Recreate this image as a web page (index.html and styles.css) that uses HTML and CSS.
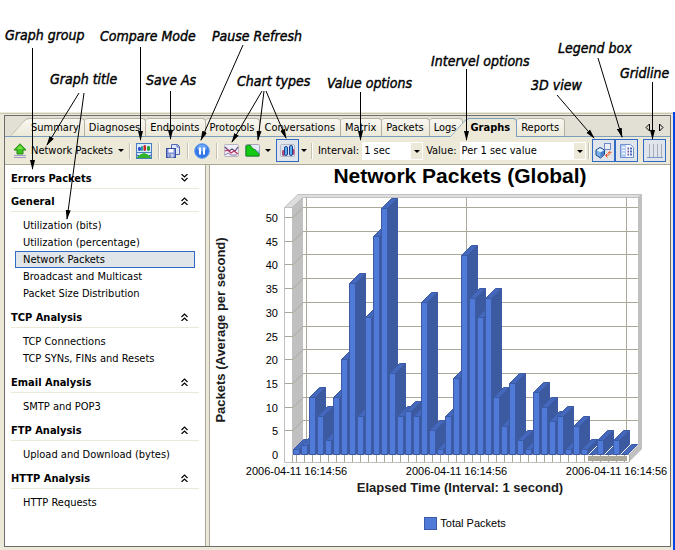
FILE: index.html
```
<!DOCTYPE html>
<html lang="en">
<head>
  <meta charset="UTF-8">
  <meta name="viewport" content="width=device-width, initial-scale=1.0">
  <title>Network Packets (Global)</title>
  <link rel="stylesheet" href="styles.css">
</head>
<body>
  <div class="page">
    <main class="window">
      <div class="frame">
        <nav class="tabs">
          <a class="tab first" href="#summary">Summary</a>
          <a class="tab" href="#diagnoses">Diagnoses</a>
          <a class="tab" href="#endpoints">Endpoints</a>
          <a class="tab" href="#protocols">Protocols</a>
          <a class="tab" href="#conversations">Conversations</a>
          <a class="tab" href="#matrix">Matrix</a>
          <a class="tab" href="#packets">Packets</a>
          <a class="tab" href="#logs">Logs</a>
          <a class="tab active" href="#graphs" aria-current="page">Graphs</a>
          <a class="tab" href="#reports">Reports</a>
          <span class="tab-scroll">
            <button type="button" aria-label="Previous tab"><svg width="5" height="9" viewBox="0 0 5 9"><path d="M4.5 1v7L1 4.5z"/></svg></button>
            <button type="button" aria-label="Next tab"><svg width="5" height="9" viewBox="0 0 5 9"><path d="M.5 1v7L4 4.5z"/></svg></button>
          </span>
        </nav>

        <div class="toolbar">
          <button type="button" class="tool title-tool">
            <svg width="14" height="15" viewBox="0 0 14 15">
              <path d="M7 .8 13 7H10v4H4V7H1z" fill="#3cc41c" stroke="#2a8a18"/>
              <path d="M7 2.5 10 6H4z" fill="#7be04a"/>
              <path d="M1 12.5h12M1 14.5h12" stroke="#9a9ac4"/>
            </svg>
            Network Packets
            <i class="caret"></i>
          </button>
          <i class="sep"></i>
          <button type="button" class="tool" aria-label="Compare Mode">
            <svg width="16" height="16" viewBox="0 0 16 16">
              <rect x=".5" y=".5" width="15" height="15" fill="#d8ecff" stroke="#4a7cc0"/>
              <rect x="2" y="4" width="3" height="4" rx="1.400" fill="#3048d0"/>
              <rect x="5" y="3" width="2" height="5" rx="1" fill="#28a0a0"/>
              <rect x="7.500" y="2" width="2.500" height="6" rx="1.200" fill="#d02828"/>
              <rect x="11" y="3" width="3" height="5" rx="1.400" fill="#28a030"/>
              <path d="M1 9.500h14" stroke="#4a7cc0"/>
              <path d="M1 15v-1l4-3 3-1 3 1 4 3v1z" fill="#32b428"/>
              <path d="M1 12l2 1M15 12l-2 1" stroke="#2850c0" fill="none"/>
            </svg>
          </button>
          <i class="sep"></i>
          <button type="button" class="tool" aria-label="Save As">
            <svg width="16" height="16" viewBox="0 0 16 16">
              <path d="M6.500 1.500h6l2 2v8h-8z" fill="#dfe8fb" stroke="#5468b8"/>
              <path d="M12 1.500v2.500h2.500" fill="none" stroke="#5468b8"/>
              <rect x="1.500" y="5.500" width="9" height="9" fill="#7c90d8" stroke="#3a4c9c"/>
              <rect x="3.500" y="6" width="5" height="3.500" fill="#fff"/>
              <rect x="3.500" y="11" width="5" height="3.500" fill="#c8d2ee"/>
              <path d="M5 11.500v3" stroke="#3a4c9c"/>
            </svg>
          </button>
          <i class="sep"></i>
          <button type="button" class="tool" aria-label="Pause Refresh">
            <svg width="16" height="16" viewBox="0 0 16 16">
              <circle cx="8" cy="8" r="7.300" fill="#3478e8" stroke="#5c98f0"/>
              <ellipse cx="8" cy="5" rx="5" ry="3.500" fill="#6ca4f6"/>
              <path d="M6 4.500v7M10 4.500v7" stroke="#fff" stroke-width="2"/>
            </svg>
          </button>
          <i class="sep"></i>
          <button type="button" class="tool" aria-label="Line chart">
            <svg width="15" height="15" viewBox="0 0 15 15">
              <rect x=".5" y="1.500" width="14" height="12" rx="1" fill="#f0eef6" stroke="#b8b4c4"/>
              <path d="M1 4l4 4 3-2 3 2 3-4" fill="none" stroke="#604878" stroke-width="1.200"/>
              <path d="M1 8l3-1 3 3 3-2 4 3" fill="none" stroke="#c03060" stroke-width="1.200"/>
              <path d="M1 12l3-2 3 2h6" fill="none" stroke="#8c7ca8"/>
            </svg>
          </button>
          <button type="button" class="tool split" aria-label="Area chart">
            <svg width="15" height="15" viewBox="0 0 15 15">
              <rect x=".5" y="1.500" width="14" height="12" rx="1" fill="#e8ecfa" stroke="#a8a4b8"/>
              <path d="M1 13V3l4-1 3 4 3 1 3 4v2z" fill="#14c814" stroke="#0a9014"/>
              <path d="M10 6l4 4V7" stroke="#8c9ce0" fill="none"/>
            </svg>
            <i class="caret"></i>
          </button>
          <button type="button" class="tool toggled" aria-label="Bar chart" aria-pressed="true">
            <svg width="15" height="15" viewBox="0 0 15 15">
              <rect x=".5" y="1.500" width="14" height="12" rx="1" fill="#dce2ee" stroke="#b4b8c4"/>
              <rect x="2" y="7" width="3" height="6" rx="1.400" fill="#b84878"/>
              <rect x="4.500" y="3.500" width="3" height="9" rx="1.400" fill="#5cb0f0" stroke="#203c90"/>
              <rect x="11.500" y="6" width="3" height="6" rx="1.400" fill="#b84878"/>
              <rect x="9.500" y="2.500" width="3" height="10" rx="1.400" fill="#5cb0f0" stroke="#203c90"/>
            </svg>
          </button>
          <button type="button" class="caret-btn" aria-label="Bar chart styles"><i class="caret"></i></button>
          <i class="sep"></i>
          <label class="field-label" for="interval">Interval:</label>
          <span class="combo combo-interval">
            <select id="interval"><option>1 sec</option></select>
          </span>
          <label class="field-label" for="value">Value:</label>
          <span class="combo combo-value">
            <select id="value"><option>Per 1 sec value</option></select>
          </span>
          <i class="sep"></i>
          <span class="toggle-group">
            <button type="button" class="tool toggled" aria-label="3D view" aria-pressed="true">
              <svg width="17" height="17" viewBox="0 0 17 17">
                <path d="M1 8l4-2.500L9.500 8v4.500L5.500 16 1 13z" fill="#78b0e8" stroke="#1c4488"/>
                <path d="M1.500 8.200l4 2 3.500-2-4-2z" fill="#e4f4ff"/>
                <path d="M5.500 10.500v5l3.500-3v-4z" fill="#4880c8"/>
                <rect x="9.500" y="1.500" width="6" height="6" fill="#e8eef8" stroke="#7088c8"/>
                <path d="M15 10c0 3-2 3.500-4 3.500M13 11l2-1.500L16.500 11M12.500 11.500l-2 2 2 2" fill="none" stroke="#f05010"/>
              </svg>
            </button>
            <button type="button" class="tool toggled" aria-label="Legend box" aria-pressed="true">
              <svg width="16" height="16" viewBox="0 0 16 16">
                <path d="M1.500 1.500h10l3 3v10h-13z" fill="#f4f8ff" stroke="#7090cc"/>
                <path d="M2 2h5v12H2z" fill="#b4cdf0"/>
                <path d="M3 4.500h3M3 7.500h3M3 10.500h3" stroke="#fff"/>
                <path d="M8.500 5.500h1.500M8.500 8.500h1.500M8.500 11.500h1.500" stroke="#7858a0" stroke-width="2"/>
                <path d="M11 5.500h2M11 8.500h2M11 11.500h2" stroke="#4868b8" stroke-width="2"/>
              </svg>
            </button>
          </span>
          <button type="button" class="tool toggled" aria-label="Gridline" aria-pressed="true">
            <svg width="16" height="16" viewBox="0 0 16 16">
              <path d="M2.500 1v13M6.500 1v13M10.500 1v13M14.500 1v13" stroke="#a8acb8"/>
              <path d="M0 14.500h16" stroke="#7c94cc"/>
            </svg>
          </button>
        </div>

        <div class="content">
          <aside class="sidebar">
            <button type="button" class="group closed">Errors Packets <svg class="chev" width="7" height="8" viewBox="0 0 7 8"><path d="M.5 4l3-3 3 3M.5 8l3-3 3 3"/></svg></button>
            <button type="button" class="group">General <svg class="chev" width="7" height="8" viewBox="0 0 7 8"><path d="M.5 4l3-3 3 3M.5 8l3-3 3 3"/></svg></button>
            <ul class="graphs">
              <li><a href="#bits">Utilization (bits)</a></li>
              <li><a href="#percentage">Utilization (percentage)</a></li>
              <li><a class="selected" href="#network">Network Packets</a></li>
              <li><a href="#broadcast">Broadcast and Multicast</a></li>
              <li><a href="#size">Packet Size Distribution</a></li>
            </ul>
            <button type="button" class="group">TCP Analysis <svg class="chev" width="7" height="8" viewBox="0 0 7 8"><path d="M.5 4l3-3 3 3M.5 8l3-3 3 3"/></svg></button>
            <ul class="graphs">
              <li><a href="#tcp">TCP Connections</a></li>
              <li><a href="#syn">TCP SYNs, FINs and Resets</a></li>
            </ul>
            <button type="button" class="group">Email Analysis <svg class="chev" width="7" height="8" viewBox="0 0 7 8"><path d="M.5 4l3-3 3 3M.5 8l3-3 3 3"/></svg></button>
            <ul class="graphs">
              <li><a href="#smtp">SMTP and POP3</a></li>
            </ul>
            <button type="button" class="group">FTP Analysis <svg class="chev" width="7" height="8" viewBox="0 0 7 8"><path d="M.5 4l3-3 3 3M.5 8l3-3 3 3"/></svg></button>
            <ul class="graphs">
              <li><a href="#ftp">Upload and Download (bytes)</a></li>
            </ul>
            <button type="button" class="group">HTTP Analysis <svg class="chev" width="7" height="8" viewBox="0 0 7 8"><path d="M.5 4l3-3 3 3M.5 8l3-3 3 3"/></svg></button>
            <ul class="graphs">
              <li><a href="#http">HTTP Requests</a></li>
            </ul>
          </aside>

          <section class="chart">
            <h1>Network Packets (Global)</h1>
            <svg class="plot" id="plot" viewBox="0 0 460 318" role="img" aria-label="Packets per second">
              <!-- walls of the 3D box -->
              <path class="cap" d="M74.500 20.500 88 7.500H431.500L428 10.500H93L82.500 20.500z"/>
              <path class="wall" d="M82 20 93 10V257L82 268z"/>
              <path class="wall" d="M428 10 432 7V262L419 275V267L428 258z"/>
              <g id="grid" class="grid"></g>
              <path class="edge" d="M74.500 20V275.500H419"/>
              <g id="bars" class="bars"></g>
              <g id="labels" class="labels"></g>
              <rect class="scroll" x="378" y="269" width="39" height="5"/>
              <text class="axis-title" x="250" y="305" text-anchor="middle">Elapsed Time (Interval: 1 second)</text>
              <text class="axis-title" transform="translate(15 143) rotate(-90)" text-anchor="middle">Packets (Average per second)</text>
            </svg>
            <p class="legend"><i class="swatch"></i>Total Packets</p>
          </section>
        </div>
      </div>
    </main>

    <!-- callouts drawn over the window -->
    <svg class="callouts" width="675" height="240" viewBox="0 0 675 240">
      <defs>
        <marker id="arrow" markerWidth="10" markerHeight="6" refX="9" refY="3" orient="auto" markerUnits="userSpaceOnUse">
          <path d="M0 .5 10 3 0 5.500z"/>
        </marker>
      </defs>
      <g class="lines">
        <path d="M32.500 48V169"/>
        <path d="M79 93 47 145"/>
        <path d="M84 93 67 219"/>
        <path d="M140.500 47V140"/>
        <path d="M170.500 91V139"/>
        <path d="M243 45 201 140"/>
        <path d="M262 91 232 142"/>
        <path d="M264 91 258 140"/>
        <path d="M266 91 286 138"/>
        <path d="M360.500 92V140"/>
        <path d="M466.500 69V140"/>
        <path d="M557 95 594 138"/>
        <path d="M598 58 622 137"/>
        <path d="M652.500 82V139"/>
      </g>
      <g class="names">
        <text x="5" y="40">Graph group</text>
        <text x="100" y="41">Compare Mode</text>
        <text x="212" y="41">Pause Refresh</text>
        <text x="50" y="84">Graph title</text>
        <text x="146" y="85">Save As</text>
        <text x="237" y="86">Chart types</text>
        <text x="327" y="88">Value options</text>
        <text x="431" y="66">Intervel options</text>
        <text x="531" y="90">3D view</text>
        <text x="558" y="53">Legend box</text>
        <text x="620" y="78">Gridline</text>
      </g>
    </svg>
  </div>
  <script src="chart.js"></script>
</body>
</html>
```
FILE: styles.css
```
* {
  box-sizing: border-box;
}
body {
  margin: 0;
  background: #fff;
  color: #000;
  font: 11px/17px "DejaVu Sans Condensed", Tahoma, sans-serif;
}
a {
  color: inherit;
  text-decoration: none;
}
button {
  margin: 0;
  padding: 0;
  border: 0;
  background: none;
  color: inherit;
  font: inherit;
}
.page {
  position: relative;
  display: flex;
  flex-direction: column;
  min-height: 100vh;
  padding-top: 112px;
}
.window {
  flex: 1;
  display: flex;
  padding: 3px 2px 3px 4px;
  background: #ece9d8;
  border-right: 2px solid #0046e6;
  box-shadow: inset 0 1px #ece9d8, inset 0 2px #c8c5b2;
}
.frame {
  flex: 1;
  display: flex;
  flex-direction: column;
  min-width: 0;
  border: 1px solid #6c6c6c;
}

/* tabs */
.tabs {
  display: flex;
  height: 21px;
  padding: 2px 6px 0 22px;
  background: #e2e0d4;
  border-bottom: 1px solid #7b9ebd;
}
.tab {
  position: relative;
  padding: 0 5px 0 4px;
  height: 18px;
  line-height: 18px;
  background: linear-gradient(#f8f7f2, #ece9d8);
  border: solid #b4b1a0;
  border-width: 1px 1px 0 0;
  border-radius: 3px 4px 0 0;
}
.tab.first {
  border-left: 0;
}
/* slanted left edge */
.tab.first::before,
.tab.active::before {
  content: '';
  position: absolute;
  z-index: -1;
  top: -1px;
  bottom: 0;
  left: -9px;
  width: 20px;
  background: linear-gradient(#f8f7f2, #ece9d8);
  border: solid #b4b1a0;
  border-width: 1px 0 0 1px;
  border-radius: 4px 0 0 0;
  transform: skewX(-42deg);
}
.tab.first,
.tab.active {
  z-index: 1;
}
.tab.active {
  height: 19px;
  padding: 0 6px 0 4px;
  margin-left: 4px;
  font-weight: bold;
  background: #ece9d8;
  border-color: #7b9ebd;
}
.tab.active::before {
  background: #ece9d8;
  border-color: #7b9ebd;
}
.tab-scroll {
  display: flex;
  gap: 9px;
  margin-left: auto;
  align-items: center;
}
.tab-scroll svg {
  display: block;
  fill: none;
  stroke: #000;
}

/* toolbar */
.toolbar {
  display: flex;
  align-items: center;
  height: 28px;
  padding: 0 4px 0 8px;
  background: #ece9d8;
  border-bottom: 1px solid #aca899;
}
.tool {
  display: flex;
  align-items: center;
  justify-content: center;
  flex: none;
  width: 23px;
  height: 23px;
}
.title-tool {
  width: auto;
  gap: 4px;
  padding-right: 3px;
}
.title-tool .caret {
  margin-left: 1px;
}
.split {
  width: 33px;
  gap: 5px;
  padding-right: 3px;
}
.toggled {
  background: #dfe5ea;
  border: 1px solid #316ac5;
}
.caret {
  border: solid transparent;
  border-width: 3px 3px 0;
  border-top-color: #000;
}
.caret-btn {
  display: flex;
  padding: 0 2px;
}
.sep {
  flex: none;
  width: 2px;
  height: 16px;
  margin: 0 2px;
  background: #c5c2b2;
  border-right: 1px solid #fff;
}
.field-label {
  padding: 0 3px;
}
.combo {
  position: relative;
  height: 18px;
  background: #fff;
}
.combo-interval {
  width: 61px;
}
.combo-value {
  flex: 1;
}
.combo select {
  width: 100%;
  height: 18px;
  padding: 0 14px 0 2px;
  border: 0;
  background: none;
  color: #000;
  font: inherit;
  appearance: none;
}
.combo::before {
  content: '';
  position: absolute;
  inset: 1px 1px 1px auto;
  width: 11px;
  background: #ece9d8;
}
.combo::after {
  content: '';
  position: absolute;
  top: 8px;
  right: 3px;
  border: solid transparent;
  border-width: 3px 3px 0;
  border-top-color: #000;
}
.toggle-group {
  display: flex;
  margin-right: 5px;
}

/* sidebar */
.content {
  flex: 1;
  display: flex;
  background: #ece9d8;
}
.sidebar {
  flex: none;
  width: 201px;
  padding: 1px 6px 0;
  background: #fff;
  border-right: 1px solid #aca899;
}
.group {
  display: flex;
  align-items: center;
  justify-content: space-between;
  width: 100%;
  height: 23px;
  padding: 2px 11px 0 0;
  border-bottom: 1px solid #ece9d8;
  font-weight: bold;
}
.chev {
  fill: none;
  stroke: #000;
  stroke-width: 1.2;
}
.closed .chev {
  transform: scaleY(-1);
}
.graphs {
  margin: 0;
  padding: 5px 4px 3px;
  list-style: none;
}
.graphs a {
  display: block;
  height: 17px;
  padding-left: 7px;
  line-height: 15px;
  border: 1px solid transparent;
}
.graphs .selected {
  background: #dfe5e9;
  border-color: #316ac5;
}

/* chart */
.chart {
  flex: 1;
  min-width: 0;
  margin-left: 3px;
  background: #fff;
  border-left: 1px solid #aca899;
  font-family: "Liberation Sans", Arial, sans-serif;
}
.chart h1 {
  margin: 0;
  padding-left: 40px;
  font-size: 21px;
  line-height: 22px;
  text-align: center;
}
.plot {
  display: block;
  width: 100%;
}
.cap {
  fill: #dedede;
  stroke: #c0c0c0;
}
.wall {
  fill: #c0c0c0;
}
.edge {
  fill: none;
  stroke: #c0c0c0;
}
.grid {
  fill: none;
  stroke: #aca899;
}
.bars {
  stroke: #3c5aa5;
}
.bar-front {
  fill: #507ad8;
}
.bar-side {
  fill: #3c5aa0;
}
.bar-top {
  fill: #4468bc;
}
.labels {
  font-size: 11px;
}
.scroll {
  fill: #aca899;
}
.axis-title {
  font-size: 13px;
  font-weight: bold;
  fill: #1c1c1c;
}
.legend {
  display: flex;
  align-items: center;
  justify-content: center;
  gap: 3px;
  margin: 0;
  padding: 10px 0 10px 50px;
}
.swatch {
  width: 13px;
  height: 13px;
  background: #507ad8;
  border: 1px solid #3c5aa5;
}

/* callouts */
.callouts {
  position: absolute;
  z-index: 2;
  top: 0;
  left: 0;
  pointer-events: none;
}
.lines path {
  stroke: #000;
  marker-end: url(#arrow);
}
.names {
  font-size: 14px;
  font-style: italic;
  stroke: #000;
  stroke-width: .4px;
}
```
FILE: chart.js
```
var values = [1, 2, 12, 8, 3, 12, 20, 36, 8, 29, 46, 52, 17, 8, 9, 8, 32, 5, 1, 8, 16,
  42, 33, 29, 33, 12, 6, 15, 3, 1, 13, 10, 7, 8, 1, 6, 1, 0, 3, 0, 3, 0];
var base = 267.5, unit = 4.74, left = 83.5, step = 8, depth = 10;
var grid = '', bars = '', labels = '';

function yOf(v) {
  return Math.round(base - v * unit - 0.5) + 0.5;
}

// horizontal lines: tick, side wall, back wall
for (var v = 0; v <= 50; v += 5) {
  var y = yOf(v);
  if (v) grid += '<path d="M75 ' + y + 'h8l10 -10H428"/>';
  labels += '<text x="68" y="' + (y + 4) + '" text-anchor="end">' + v + '</text>';
}

// every 20 bars: a vertical line and a time label
[0, 20, 40].forEach(function (i) {
  var x = left + 3 + i * step;
  grid += '<path d="M' + (x + depth) + ' 10V257"/>';
  labels += '<text x="' + x + '" y="288" text-anchor="middle">2006-04-11 16:14:56</text>';
});

values.forEach(function (v, i) {
  var x = left + i * step, y = yOf(v), r = x + 6;
  grid += '<path d="M' + (x + 3) + ' 268v7"/>';
  bars += '<path class="bar-top" d="M' + x + ' ' + y + 'l10 -10h6l-10 10z"/>';
  if (v) {
    bars += '<path class="bar-side" d="M' + r + ' ' + y + 'l10 -10V' + (base - depth) + 'L' + r + ' ' + base + 'z"/>';
    bars += '<path class="bar-front" d="M' + x + ' ' + y + 'h6V' + base + 'h-6z"/>';
  }
});

grid += '<path d="M82.5 268v7M83 267.5H419M419.5 268v7"/>';
document.getElementById('grid').innerHTML = grid;
document.getElementById('bars').innerHTML = bars;
document.getElementById('labels').innerHTML = labels;
```
